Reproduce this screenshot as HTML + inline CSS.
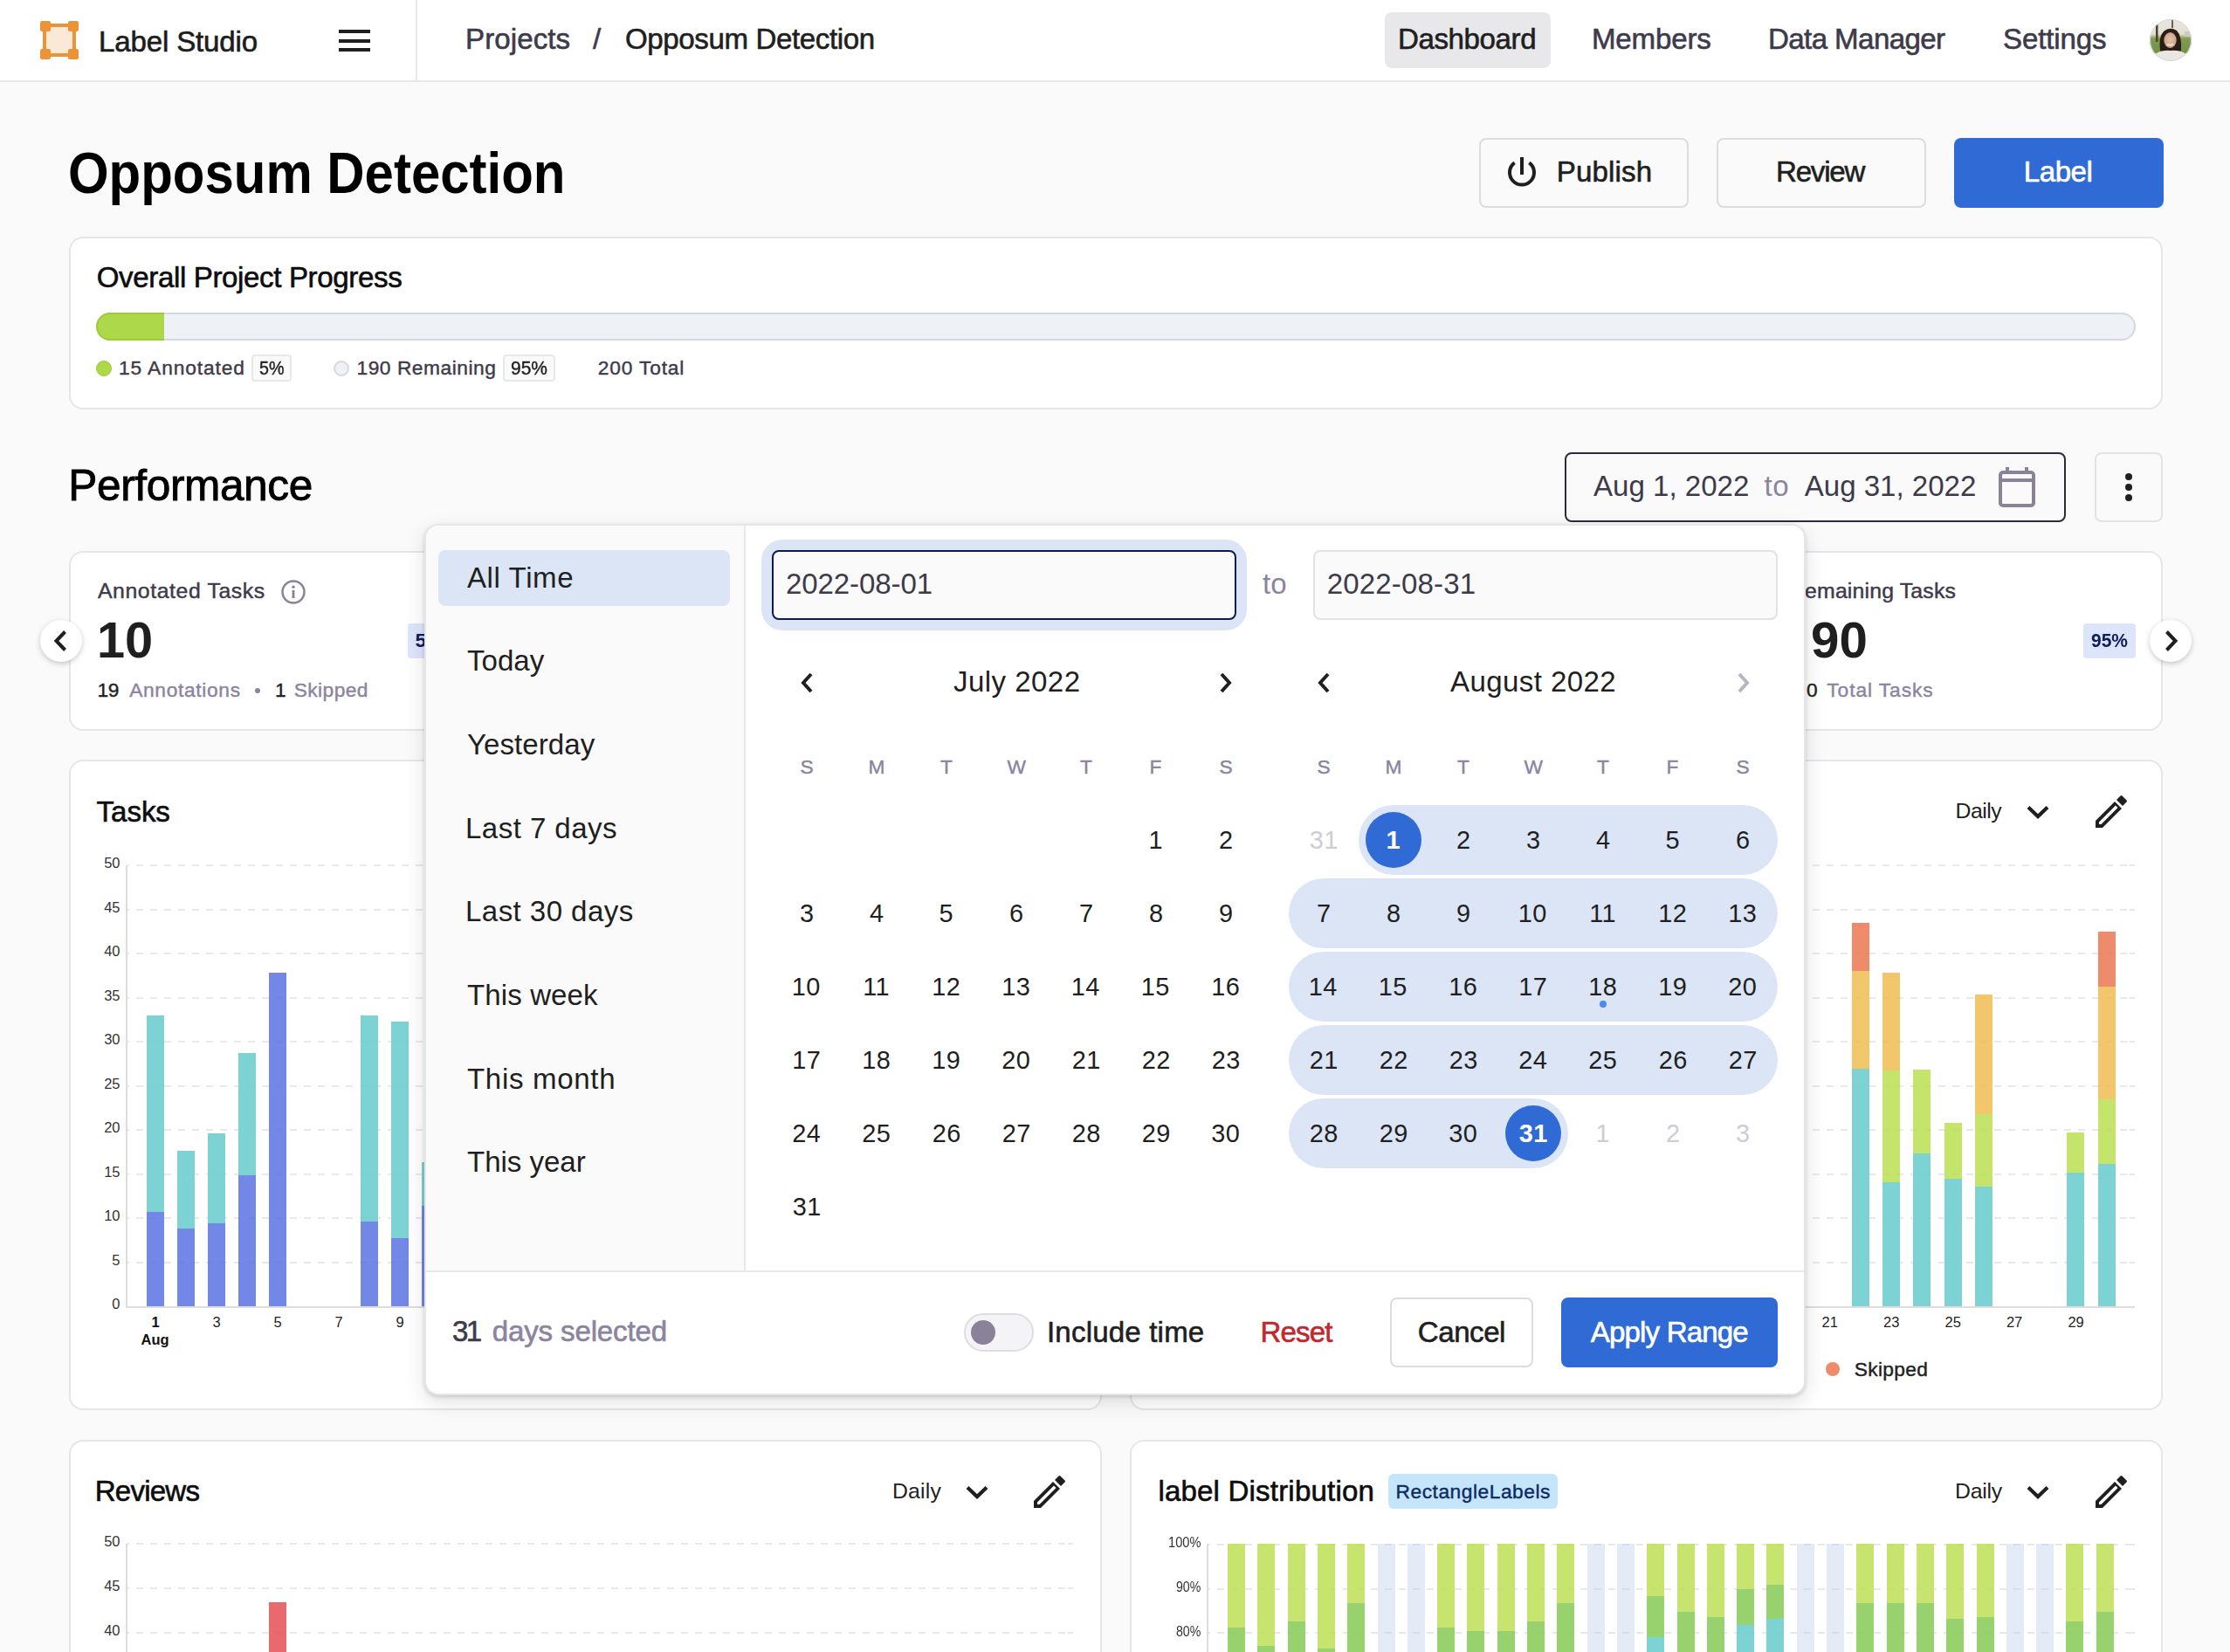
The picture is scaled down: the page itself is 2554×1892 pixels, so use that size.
<!DOCTYPE html><html><head><meta charset="utf-8"><title>Label Studio</title><style>
html,body{margin:0;padding:0;}
body{width:2554px;height:1892px;overflow:hidden;position:relative;background:#fafafa;font-family:"Liberation Sans",sans-serif;}
.a{position:absolute;}
.t{position:absolute;white-space:nowrap;line-height:1;}
</style></head><body>
<div class="a" style="left:0px;top:0px;width:2554px;height:92px;background:#fff;"></div>
<div class="a" style="left:0px;top:92px;width:2554px;height:2px;background:#e8e7eb;"></div>
<div class="a" style="left:476px;top:0px;width:2px;height:92px;background:#e8e7eb;"></div>
<svg class="a" style="left:46px;top:24px" width="44" height="44" viewBox="0 0 44 44">
<rect x="5" y="5" width="34" height="34" fill="#fbe9d8" stroke="#ec9435" stroke-width="4"/>
<rect x="0" y="0" width="12" height="12" rx="2" fill="#ec9435"/><rect x="32" y="0" width="12" height="12" rx="2" fill="#ec9435"/>
<rect x="0" y="32" width="12" height="12" rx="2" fill="#ec9435"/><rect x="32" y="32" width="12" height="12" rx="2" fill="#ec9435"/></svg>
<div class="t" style="left:113.00px;top:30.70px;font-size:33.07px;color:#1c1c1c;letter-spacing:-0.15px;-webkit-text-stroke:0.60px #1c1c1c;">Label Studio</div>
<div class="a" style="left:388px;top:34px;width:36px;height:4px;background:#1f1f1f;"></div>
<div class="a" style="left:388px;top:44.5px;width:36px;height:4px;background:#1f1f1f;"></div>
<div class="a" style="left:388px;top:54.5px;width:36px;height:4px;background:#1f1f1f;"></div>
<div class="t" style="left:533.00px;top:28.20px;font-size:33.07px;color:#3d3a4a;letter-spacing:0.10px;-webkit-text-stroke:0.60px #3d3a4a;">Projects</div>
<div class="t" style="left:679.00px;top:28.20px;font-size:33.07px;color:#3d3a4a;-webkit-text-stroke:0.60px #3d3a4a;">/</div>
<div class="t" style="left:716.00px;top:28.20px;font-size:33.07px;color:#1f1f1f;letter-spacing:-0.38px;-webkit-text-stroke:0.60px #1f1f1f;">Opposum Detection</div>
<div class="a" style="left:1586px;top:14px;width:190px;height:64px;background:#e8e8ea;border-radius:8px;"></div>
<div class="t" style="left:1601.00px;top:28.40px;font-size:33.07px;color:#1f1f1f;letter-spacing:-0.40px;-webkit-text-stroke:0.60px #1f1f1f;">Dashboard</div>
<div class="t" style="left:1823.00px;top:28.40px;font-size:33.07px;color:#3d3a4a;letter-spacing:-0.17px;-webkit-text-stroke:0.60px #3d3a4a;">Members</div>
<div class="t" style="left:2025.00px;top:28.40px;font-size:33.07px;color:#3d3a4a;letter-spacing:-0.58px;-webkit-text-stroke:0.60px #3d3a4a;">Data Manager</div>
<div class="t" style="left:2294.00px;top:28.40px;font-size:33.07px;color:#3d3a4a;letter-spacing:-0.14px;-webkit-text-stroke:0.60px #3d3a4a;">Settings</div>
<svg class="a" style="left:2462px;top:22px" width="48" height="48" viewBox="0 0 48 48">
<defs><clipPath id="av"><circle cx="24" cy="24" r="24"/></clipPath>
<linearGradient id="bgav" x1="0" y1="0" x2="0" y2="1"><stop offset="0" stop-color="#e9e6e0"/><stop offset="0.36" stop-color="#e4dfd5"/><stop offset="0.40" stop-color="#b9c47e"/><stop offset="0.46" stop-color="#7f9c52"/><stop offset="1" stop-color="#6b8a40"/></linearGradient>
<filter id="avblur"><feGaussianBlur stdDeviation="0.5"/></filter><radialGradient id="skin" cx="0.5" cy="0.45" r="0.6"><stop offset="0" stop-color="#e3c1a8"/><stop offset="1" stop-color="#c99b80"/></radialGradient></defs>
<g clip-path="url(#av)"><g filter="url(#avblur)">
<rect width="48" height="48" fill="url(#bgav)"/>
<rect x="7" y="6" width="2.5" height="20" fill="#4a4032"/><rect x="25" y="0" width="2" height="10" fill="#6a6050"/><rect x="40" y="14" width="8" height="6" fill="#cfc8bc"/>
<path d="M12 36 Q10 20 16 14 Q23 8 31 13 Q37 19 36 36 Q30 39 24 38 Q17 39 12 36Z" fill="#2a1d15"/>
<ellipse cx="23.5" cy="24" rx="7.2" ry="9" fill="url(#skin)"/>
<path d="M16 18 Q23 12 31 17 L31 14 Q23 9 16 15Z" fill="#2a1d15"/>
<path d="M20 28.5 Q23.5 31 27 28.5" stroke="#f4eee8" stroke-width="1.6" fill="none"/>
<path d="M0 48 L6 40 Q14 35 24 36 Q34 35 42 40 L48 48Z" fill="#ebe6e3"/>
</g></g><circle cx="24" cy="24" r="23.5" fill="none" stroke="#d8d6dc" stroke-width="1"/></svg>
<div class="t" style="left:78.19px;top:165.03px;font-size:66.10px;color:#000;font-weight:700;transform:scaleX(0.9068);transform-origin:0 0;">Opposum Detection</div>
<div class="a" style="left:1694px;top:158px;width:240px;height:80px;box-sizing:border-box;border:2px solid #dcdcdc;border-radius:8px;background:#fafafa;"></div>
<svg class="a" style="left:1725px;top:175px" width="36" height="42" viewBox="0 0 36 42">
<path d="M9.6 11.4 A14 14 0 1 0 26.4 11.4" fill="none" stroke="#1f1f1f" stroke-width="4"/>
<rect x="16" y="5" width="4" height="20" fill="#1f1f1f"/></svg>
<div class="t" style="left:1782.80px;top:180.40px;font-size:33.07px;color:#1f1f1f;letter-spacing:0.15px;-webkit-text-stroke:0.60px #1f1f1f;">Publish</div>
<div class="a" style="left:1966px;top:158px;width:240px;height:80px;box-sizing:border-box;border:2px solid #dcdcdc;border-radius:8px;background:#fafafa;"></div>
<div class="t" style="left:2034.00px;top:180.40px;font-size:33.07px;color:#1f1f1f;letter-spacing:-1.20px;-webkit-text-stroke:0.60px #1f1f1f;">Review</div>
<div class="a" style="left:2238px;top:158px;width:240px;height:80px;border-radius:8px;background:#306bd5;"></div>
<div class="t" style="left:2317.80px;top:180.40px;font-size:33.07px;color:#fff;letter-spacing:-0.45px;-webkit-text-stroke:0.60px #fff;">Label</div>
<div class="a" style="left:79px;top:271px;width:2398px;height:198px;box-sizing:border-box;border:2px solid #e6e5ea;border-radius:16px;background:#fff;"></div>
<div class="t" style="left:110.70px;top:301.00px;font-size:33.07px;color:#0d0d0d;letter-spacing:-0.36px;-webkit-text-stroke:0.60px #0d0d0d;">Overall Project Progress</div>
<div class="a" style="left:110px;top:358px;width:2336px;height:32px;box-sizing:border-box;border:2px solid #d5d8df;border-radius:16px;background:#eef1f6;overflow:hidden;"></div>
<div class="a" style="left:110px;top:358px;width:78px;height:32px;box-sizing:border-box;border:2px solid #9fcb3a;border-right:none;border-radius:16px 0 0 16px;background:#acd84a;"></div>
<div class="a" style="left:110px;top:413px;width:18px;height:18px;border-radius:50%;background:#acd84a;box-sizing:border-box;border:1.5px solid #9fcb3a;"></div>
<div class="t" style="left:136.00px;top:410.45px;font-size:22.74px;color:#3d3a4a;letter-spacing:0.91px;-webkit-text-stroke:0.41px #3d3a4a;">15 Annotated</div>
<div class="a" style="left:288px;top:406px;width:46px;height:31px;box-sizing:border-box;border:2px solid #e8e8e8;border-radius:4px;background:#fafafa;"></div>
<div class="t" style="left:296.80px;top:410.45px;font-size:22.74px;color:#1f1f1f;-webkit-text-stroke:0.41px #1f1f1f;transform:scaleX(0.8667);transform-origin:0 0;">5%</div>
<div class="a" style="left:382px;top:413px;width:18px;height:18px;border-radius:50%;background:#eef1f6;box-sizing:border-box;border:2px solid #d5d8df;"></div>
<div class="t" style="left:408.50px;top:410.45px;font-size:22.74px;color:#3d3a4a;letter-spacing:0.54px;-webkit-text-stroke:0.41px #3d3a4a;">190 Remaining</div>
<div class="a" style="left:576px;top:406px;width:60px;height:31px;box-sizing:border-box;border:2px solid #e8e8e8;border-radius:4px;background:#fafafa;"></div>
<div class="t" style="left:585.00px;top:410.45px;font-size:22.74px;color:#1f1f1f;-webkit-text-stroke:0.41px #1f1f1f;transform:scaleX(0.9217);transform-origin:0 0;">95%</div>
<div class="t" style="left:684.70px;top:410.45px;font-size:22.74px;color:#3d3a4a;letter-spacing:0.86px;-webkit-text-stroke:0.41px #3d3a4a;">200 Total</div>
<div class="t" style="left:78.30px;top:532.40px;font-size:49.60px;color:#000;letter-spacing:-0.39px;-webkit-text-stroke:0.89px #000;">Performance</div>
<div class="a" style="left:1792px;top:518px;width:574px;height:80px;box-sizing:border-box;border:2px solid #2e2a3a;border-radius:8px;background:#fafafa;"></div>
<div class="t" style="left:1825.00px;top:540.00px;font-size:33.07px;color:#3d3a4a;">Aug 1, 2022</div>
<div class="t" style="left:2020.50px;top:540.00px;font-size:33.07px;color:#8a84a0;letter-spacing:0.50px;">to</div>
<div class="t" style="left:2066.70px;top:540.00px;font-size:33.07px;color:#3d3a4a;">Aug 31, 2022</div>
<svg class="a" style="left:2289px;top:535px" width="42" height="46" viewBox="0 0 42 46">
<rect x="2" y="6" width="38" height="38" rx="3" fill="none" stroke="#8a8299" stroke-width="4"/>
<rect x="2" y="13" width="38" height="4" fill="#8a8299"/>
<rect x="8" y="0" width="4" height="8" fill="#8a8299"/><rect x="30" y="0" width="4" height="8" fill="#8a8299"/></svg>
<div class="a" style="left:2399px;top:518px;width:78px;height:80px;box-sizing:border-box;border:2px solid #e3e3e3;border-radius:8px;background:#fafafa;"></div>
<div class="a" style="left:2433.8px;top:541.8px;width:8.4px;height:8.4px;border-radius:50%;background:#1f1f1f;"></div>
<div class="a" style="left:2433.8px;top:553.8px;width:8.4px;height:8.4px;border-radius:50%;background:#1f1f1f;"></div>
<div class="a" style="left:2433.8px;top:565.8px;width:8.4px;height:8.4px;border-radius:50%;background:#1f1f1f;"></div>
<div class="a" style="left:79px;top:631px;width:462px;height:206px;box-sizing:border-box;border:2px solid #e6e5ea;border-radius:16px;background:#fff;"></div>
<div class="a" style="left:2014px;top:631px;width:463px;height:206px;box-sizing:border-box;border:2px solid #e6e5ea;border-radius:16px;background:#fff;"></div>
<div class="t" style="left:111.90px;top:664.80px;font-size:24.80px;color:#3d3a4a;letter-spacing:0.60px;-webkit-text-stroke:0.45px #3d3a4a;">Annotated Tasks</div>
<svg class="a" style="left:322px;top:664px" width="28" height="28" viewBox="0 0 28 28">
<circle cx="14" cy="14" r="12.5" fill="none" stroke="#8a8299" stroke-width="2.5"/>
<rect x="12.6" y="12" width="2.8" height="9" fill="#8a8299"/><circle cx="14" cy="8.3" r="1.7" fill="#8a8299"/></svg>
<div class="t" style="left:110.51px;top:705.48px;font-size:57.90px;color:#1f1f1f;font-weight:700;transform:scaleX(0.9966);transform-origin:0 0;">10</div>
<div class="a" style="left:467px;top:714px;width:60px;height:40px;background:#dde5fb;border-radius:4px;"></div>
<div class="t" style="left:475.50px;top:722.45px;font-size:22.74px;color:#0f1d5c;letter-spacing:0.50px;font-weight:700;">5%</div>
<div class="t" style="left:111.50px;top:779.15px;font-size:22.74px;color:#1f1f1f;letter-spacing:-0.30px;-webkit-text-stroke:0.41px #1f1f1f;">19</div>
<div class="t" style="left:148.20px;top:779.15px;font-size:22.74px;color:#8a84a0;letter-spacing:0.68px;-webkit-text-stroke:0.41px #8a84a0;">Annotations</div>
<div class="a" style="left:292px;top:788px;width:6px;height:6px;border-radius:50%;background:#8a84a0;"></div>
<div class="t" style="left:315.00px;top:779.15px;font-size:22.74px;color:#1f1f1f;-webkit-text-stroke:0.41px #1f1f1f;">1</div>
<div class="t" style="left:336.70px;top:779.15px;font-size:22.74px;color:#8a84a0;letter-spacing:0.43px;-webkit-text-stroke:0.41px #8a84a0;">Skipped</div>
<div class="t" style="left:2049.00px;top:664.80px;font-size:24.80px;color:#3d3a4a;letter-spacing:0.18px;-webkit-text-stroke:0.45px #3d3a4a;">Remaining Tasks</div>
<div class="t" style="left:2074.29px;top:705.48px;font-size:57.90px;color:#1f1f1f;font-weight:700;transform:scaleX(1.0067);transform-origin:0 0;">90</div>
<div class="a" style="left:2386px;top:714px;width:60px;height:40px;background:#dde5fb;border-radius:4px;"></div>
<div class="t" style="left:2394.90px;top:722.45px;font-size:22.74px;color:#0f1d5c;font-weight:700;transform:scaleX(0.9217);transform-origin:0 0;">95%</div>
<div class="t" style="left:2041.70px;top:779.15px;font-size:22.74px;color:#1f1f1f;letter-spacing:1.00px;-webkit-text-stroke:0.41px #1f1f1f;">200</div>
<div class="t" style="left:2092.30px;top:779.15px;font-size:22.74px;color:#8a84a0;letter-spacing:0.93px;-webkit-text-stroke:0.41px #8a84a0;">Total Tasks</div>
<div class="a" style="left:46px;top:710px;width:48px;height:48px;border-radius:50%;background:#fff;box-shadow:0 2px 6px rgba(0,0,0,.22);"></div>
<svg class="a" style="left:58px;top:720px" width="24" height="28" viewBox="0 0 24 28"><path d="M16.5 3.5 L6.5 14 L16.5 24.5" fill="none" stroke="#1f1f1f" stroke-width="4"/></svg>
<div class="a" style="left:2462px;top:710px;width:48px;height:48px;border-radius:50%;background:#fff;box-shadow:0 2px 6px rgba(0,0,0,.22);"></div>
<svg class="a" style="left:2474px;top:720px" width="24" height="28" viewBox="0 0 24 28"><path d="M7.5 3.5 L17.5 14 L7.5 24.5" fill="none" stroke="#1f1f1f" stroke-width="4"/></svg>
<div class="a" style="left:79px;top:870px;width:1183px;height:745px;box-sizing:border-box;border:2px solid #e6e5ea;border-radius:16px;background:#fff;"></div>
<div class="t" style="left:110.60px;top:912.50px;font-size:33.07px;color:#0d0d0d;letter-spacing:-0.05px;-webkit-text-stroke:0.60px #0d0d0d;">Tasks</div>
<div class="t" style="left:1022.00px;top:916.80px;font-size:24.80px;color:#1f1f1f;letter-spacing:0.18px;">Daily</div>
<svg class="a" style="left:1106px;top:922px" width="26" height="16" viewBox="0 0 26 16"><path d="M2 2.5 L13 13 L24 2.5" fill="none" stroke="#1f1f1f" stroke-width="4.2"/></svg>
<svg class="a" style="left:1183px;top:911px" width="38" height="38" viewBox="0 0 38 38">
<path d="M1 29 L23 7 L31 15 L9 37 L1 37 Z M5 30.5 L5 33 L7.5 33 L26.5 14 L24 11.5 Z" fill="#1f1f1f" fill-rule="evenodd"/>
<path d="M25 5 L29.5 0.5 Q30.5 -0.3 31.5 0.5 L36.5 5.5 Q37.3 6.5 36.5 7.5 L32 12 Z" fill="#1f1f1f"/></svg>
<div class="t" style="left:119.20px;top:980.03px;font-size:16.50px;color:#333;">50</div>
<div class="t" style="left:119.20px;top:1030.53px;font-size:16.50px;color:#333;">45</div>
<div class="t" style="left:119.20px;top:1081.03px;font-size:16.50px;color:#333;">40</div>
<div class="t" style="left:119.20px;top:1131.53px;font-size:16.50px;color:#333;">35</div>
<div class="t" style="left:119.20px;top:1182.03px;font-size:16.50px;color:#333;">30</div>
<div class="t" style="left:119.20px;top:1232.53px;font-size:16.50px;color:#333;">25</div>
<div class="t" style="left:119.20px;top:1283.03px;font-size:16.50px;color:#333;">20</div>
<div class="t" style="left:119.20px;top:1333.53px;font-size:16.50px;color:#333;">15</div>
<div class="t" style="left:119.20px;top:1384.03px;font-size:16.50px;color:#333;">10</div>
<div class="t" style="left:128.20px;top:1434.53px;font-size:16.50px;color:#333;">5</div>
<div class="t" style="left:128.20px;top:1485.03px;font-size:16.50px;color:#333;">0</div>
<div class="a" style="left:144px;top:991px;width:2px;height:506px;background:#dddde0;"></div>
<div class="a" style="left:144px;top:1496px;width:1085px;height:2px;background:#dddde0;"></div>
<div class="a" style="left:146px;top:990.0px;width:1083px;height:2px;background:repeating-linear-gradient(to right,#e8e7ec 0 8px,transparent 8px 16px);background-position:-6px 0;"></div>
<div class="a" style="left:146px;top:1040.5px;width:1083px;height:2px;background:repeating-linear-gradient(to right,#e8e7ec 0 8px,transparent 8px 16px);background-position:-6px 0;"></div>
<div class="a" style="left:146px;top:1091.0px;width:1083px;height:2px;background:repeating-linear-gradient(to right,#e8e7ec 0 8px,transparent 8px 16px);background-position:-6px 0;"></div>
<div class="a" style="left:146px;top:1141.5px;width:1083px;height:2px;background:repeating-linear-gradient(to right,#e8e7ec 0 8px,transparent 8px 16px);background-position:-6px 0;"></div>
<div class="a" style="left:146px;top:1192.0px;width:1083px;height:2px;background:repeating-linear-gradient(to right,#e8e7ec 0 8px,transparent 8px 16px);background-position:-6px 0;"></div>
<div class="a" style="left:146px;top:1242.5px;width:1083px;height:2px;background:repeating-linear-gradient(to right,#e8e7ec 0 8px,transparent 8px 16px);background-position:-6px 0;"></div>
<div class="a" style="left:146px;top:1293.0px;width:1083px;height:2px;background:repeating-linear-gradient(to right,#e8e7ec 0 8px,transparent 8px 16px);background-position:-6px 0;"></div>
<div class="a" style="left:146px;top:1343.5px;width:1083px;height:2px;background:repeating-linear-gradient(to right,#e8e7ec 0 8px,transparent 8px 16px);background-position:-6px 0;"></div>
<div class="a" style="left:146px;top:1394.0px;width:1083px;height:2px;background:repeating-linear-gradient(to right,#e8e7ec 0 8px,transparent 8px 16px);background-position:-6px 0;"></div>
<div class="a" style="left:146px;top:1444.5px;width:1083px;height:2px;background:repeating-linear-gradient(to right,#e8e7ec 0 8px,transparent 8px 16px);background-position:-6px 0;"></div>
<div class="a" style="left:168px;top:1388px;width:20px;height:108px;background:rgba(95,118,227,0.88);"></div>
<div class="a" style="left:168px;top:1163px;width:20px;height:225px;background:rgba(107,205,205,0.88);"></div>
<div class="a" style="left:203px;top:1407px;width:20px;height:89px;background:rgba(95,118,227,0.88);"></div>
<div class="a" style="left:203px;top:1318px;width:20px;height:89px;background:rgba(107,205,205,0.88);"></div>
<div class="a" style="left:238px;top:1401px;width:20px;height:95px;background:rgba(95,118,227,0.88);"></div>
<div class="a" style="left:238px;top:1298px;width:20px;height:103px;background:rgba(107,205,205,0.88);"></div>
<div class="a" style="left:273px;top:1346px;width:20px;height:150px;background:rgba(95,118,227,0.88);"></div>
<div class="a" style="left:273px;top:1206px;width:20px;height:140px;background:rgba(107,205,205,0.88);"></div>
<div class="a" style="left:308px;top:1114px;width:20px;height:382px;background:rgba(95,118,227,0.88);"></div>
<div class="a" style="left:413px;top:1399px;width:20px;height:97px;background:rgba(95,118,227,0.88);"></div>
<div class="a" style="left:413px;top:1163px;width:20px;height:236px;background:rgba(107,205,205,0.88);"></div>
<div class="a" style="left:448px;top:1418px;width:20px;height:78px;background:rgba(95,118,227,0.88);"></div>
<div class="a" style="left:448px;top:1170px;width:20px;height:248px;background:rgba(107,205,205,0.88);"></div>
<div class="a" style="left:483px;top:1381px;width:20px;height:115px;background:rgba(95,118,227,0.88);"></div>
<div class="a" style="left:483px;top:1331px;width:20px;height:50px;background:rgba(107,205,205,0.88);"></div>
<div class="a" style="left:518px;top:1375px;width:20px;height:121px;background:rgba(95,118,227,0.88);"></div>
<div class="a" style="left:518px;top:1233px;width:20px;height:142px;background:rgba(107,205,205,0.88);"></div>
<div class="a" style="left:553px;top:1395px;width:20px;height:101px;background:rgba(95,118,227,0.88);"></div>
<div class="a" style="left:553px;top:1244px;width:20px;height:151px;background:rgba(107,205,205,0.88);"></div>
<div class="a" style="left:588px;top:1405px;width:20px;height:91px;background:rgba(95,118,227,0.88);"></div>
<div class="a" style="left:588px;top:1284px;width:20px;height:121px;background:rgba(107,205,205,0.88);"></div>
<div class="a" style="left:623px;top:1385px;width:20px;height:111px;background:rgba(95,118,227,0.88);"></div>
<div class="a" style="left:623px;top:1203px;width:20px;height:182px;background:rgba(107,205,205,0.88);"></div>
<div class="a" style="left:658px;top:1355px;width:20px;height:141px;background:rgba(95,118,227,0.88);"></div>
<div class="a" style="left:658px;top:1254px;width:20px;height:101px;background:rgba(107,205,205,0.88);"></div>
<div class="a" style="left:693px;top:1415px;width:20px;height:81px;background:rgba(95,118,227,0.88);"></div>
<div class="a" style="left:693px;top:1284px;width:20px;height:131px;background:rgba(107,205,205,0.88);"></div>
<div class="a" style="left:728px;top:1375px;width:20px;height:121px;background:rgba(95,118,227,0.88);"></div>
<div class="a" style="left:728px;top:1203px;width:20px;height:172px;background:rgba(107,205,205,0.88);"></div>
<div class="a" style="left:763px;top:1395px;width:20px;height:101px;background:rgba(95,118,227,0.88);"></div>
<div class="a" style="left:763px;top:1274px;width:20px;height:121px;background:rgba(107,205,205,0.88);"></div>
<div class="a" style="left:798px;top:1405px;width:20px;height:91px;background:rgba(95,118,227,0.88);"></div>
<div class="a" style="left:798px;top:1244px;width:20px;height:161px;background:rgba(107,205,205,0.88);"></div>
<div class="a" style="left:833px;top:1385px;width:20px;height:111px;background:rgba(95,118,227,0.88);"></div>
<div class="a" style="left:833px;top:1294px;width:20px;height:91px;background:rgba(107,205,205,0.88);"></div>
<div class="t" style="left:173.50px;top:1506.03px;font-size:16.50px;color:#111;font-weight:700;">1</div>
<div class="t" style="left:243.50px;top:1506.03px;font-size:16.50px;color:#1f1f1f;">3</div>
<div class="t" style="left:313.50px;top:1506.03px;font-size:16.50px;color:#1f1f1f;">5</div>
<div class="t" style="left:383.50px;top:1506.03px;font-size:16.50px;color:#1f1f1f;">7</div>
<div class="t" style="left:453.50px;top:1506.03px;font-size:16.50px;color:#1f1f1f;">9</div>
<div class="t" style="left:519.00px;top:1506.03px;font-size:16.50px;color:#1f1f1f;">11</div>
<div class="t" style="left:588.50px;top:1506.03px;font-size:16.50px;color:#1f1f1f;">13</div>
<div class="t" style="left:658.50px;top:1506.03px;font-size:16.50px;color:#1f1f1f;">15</div>
<div class="t" style="left:728.50px;top:1506.03px;font-size:16.50px;color:#1f1f1f;">17</div>
<div class="t" style="left:798.50px;top:1506.03px;font-size:16.50px;color:#1f1f1f;">19</div>
<div class="t" style="left:869.00px;top:1506.03px;font-size:16.50px;color:#1f1f1f;">21</div>
<div class="t" style="left:939.00px;top:1506.03px;font-size:16.50px;color:#1f1f1f;">23</div>
<div class="t" style="left:1009.00px;top:1506.03px;font-size:16.50px;color:#1f1f1f;">25</div>
<div class="t" style="left:1079.00px;top:1506.03px;font-size:16.50px;color:#1f1f1f;">27</div>
<div class="t" style="left:1149.00px;top:1506.03px;font-size:16.50px;color:#1f1f1f;">29</div>
<div class="t" style="left:161.50px;top:1526.03px;font-size:16.50px;color:#111;font-weight:700;">Aug</div>
<div class="a" style="left:1294px;top:870px;width:1183px;height:745px;box-sizing:border-box;border:2px solid #e6e5ea;border-radius:16px;background:#fff;"></div>
<div class="t" style="left:2239.60px;top:916.80px;font-size:24.80px;color:#1f1f1f;letter-spacing:-0.52px;">Daily</div>
<svg class="a" style="left:2321px;top:922px" width="26" height="16" viewBox="0 0 26 16"><path d="M2 2.5 L13 13 L24 2.5" fill="none" stroke="#1f1f1f" stroke-width="4.2"/></svg>
<svg class="a" style="left:2399px;top:911px" width="38" height="38" viewBox="0 0 38 38">
<path d="M1 29 L23 7 L31 15 L9 37 L1 37 Z M5 30.5 L5 33 L7.5 33 L26.5 14 L24 11.5 Z" fill="#1f1f1f" fill-rule="evenodd"/>
<path d="M25 5 L29.5 0.5 Q30.5 -0.3 31.5 0.5 L36.5 5.5 Q37.3 6.5 36.5 7.5 L32 12 Z" fill="#1f1f1f"/></svg>
<div class="a" style="left:1362px;top:1496px;width:1083px;height:2px;background:#dddde0;"></div>
<div class="a" style="left:1362px;top:990.0px;width:1083px;height:2px;background:repeating-linear-gradient(to right,#e8e7ec 0 8px,transparent 8px 16px);background-position:-6px 0;"></div>
<div class="a" style="left:1362px;top:1040.5px;width:1083px;height:2px;background:repeating-linear-gradient(to right,#e8e7ec 0 8px,transparent 8px 16px);background-position:-6px 0;"></div>
<div class="a" style="left:1362px;top:1091.0px;width:1083px;height:2px;background:repeating-linear-gradient(to right,#e8e7ec 0 8px,transparent 8px 16px);background-position:-6px 0;"></div>
<div class="a" style="left:1362px;top:1141.5px;width:1083px;height:2px;background:repeating-linear-gradient(to right,#e8e7ec 0 8px,transparent 8px 16px);background-position:-6px 0;"></div>
<div class="a" style="left:1362px;top:1192.0px;width:1083px;height:2px;background:repeating-linear-gradient(to right,#e8e7ec 0 8px,transparent 8px 16px);background-position:-6px 0;"></div>
<div class="a" style="left:1362px;top:1242.5px;width:1083px;height:2px;background:repeating-linear-gradient(to right,#e8e7ec 0 8px,transparent 8px 16px);background-position:-6px 0;"></div>
<div class="a" style="left:1362px;top:1293.0px;width:1083px;height:2px;background:repeating-linear-gradient(to right,#e8e7ec 0 8px,transparent 8px 16px);background-position:-6px 0;"></div>
<div class="a" style="left:1362px;top:1343.5px;width:1083px;height:2px;background:repeating-linear-gradient(to right,#e8e7ec 0 8px,transparent 8px 16px);background-position:-6px 0;"></div>
<div class="a" style="left:1362px;top:1394.0px;width:1083px;height:2px;background:repeating-linear-gradient(to right,#e8e7ec 0 8px,transparent 8px 16px);background-position:-6px 0;"></div>
<div class="a" style="left:1362px;top:1444.5px;width:1083px;height:2px;background:repeating-linear-gradient(to right,#e8e7ec 0 8px,transparent 8px 16px);background-position:-6px 0;"></div>
<div class="a" style="left:2120.7px;top:1224px;width:20px;height:272px;background:rgba(107,205,205,0.88);"></div>
<div class="a" style="left:2120.7px;top:1112px;width:20px;height:112px;background:rgba(240,190,87,0.88);"></div>
<div class="a" style="left:2120.7px;top:1057px;width:20px;height:55px;background:rgba(235,123,86,0.88);"></div>
<div class="a" style="left:2156.0px;top:1354px;width:20px;height:142px;background:rgba(107,205,205,0.88);"></div>
<div class="a" style="left:2156.0px;top:1226px;width:20px;height:128px;background:rgba(189,224,87,0.88);"></div>
<div class="a" style="left:2156.0px;top:1114px;width:20px;height:112px;background:rgba(240,190,87,0.88);"></div>
<div class="a" style="left:2191.2px;top:1321px;width:20px;height:175px;background:rgba(107,205,205,0.88);"></div>
<div class="a" style="left:2191.2px;top:1225px;width:20px;height:96px;background:rgba(189,224,87,0.88);"></div>
<div class="a" style="left:2226.5px;top:1350px;width:20px;height:146px;background:rgba(107,205,205,0.88);"></div>
<div class="a" style="left:2226.5px;top:1286px;width:20px;height:64px;background:rgba(189,224,87,0.88);"></div>
<div class="a" style="left:2261.7px;top:1359px;width:20px;height:137px;background:rgba(107,205,205,0.88);"></div>
<div class="a" style="left:2261.7px;top:1276px;width:20px;height:83px;background:rgba(189,224,87,0.88);"></div>
<div class="a" style="left:2261.7px;top:1139px;width:20px;height:137px;background:rgba(240,190,87,0.88);"></div>
<div class="a" style="left:2367.4px;top:1343px;width:20px;height:153px;background:rgba(107,205,205,0.88);"></div>
<div class="a" style="left:2367.4px;top:1297px;width:20px;height:46px;background:rgba(189,224,87,0.88);"></div>
<div class="a" style="left:2402.7px;top:1333px;width:20px;height:163px;background:rgba(107,205,205,0.88);"></div>
<div class="a" style="left:2402.7px;top:1259px;width:20px;height:74px;background:rgba(189,224,87,0.88);"></div>
<div class="a" style="left:2402.7px;top:1130px;width:20px;height:129px;background:rgba(240,190,87,0.88);"></div>
<div class="a" style="left:2402.7px;top:1067px;width:20px;height:63px;background:rgba(235,123,86,0.88);"></div>
<div class="t" style="left:1456.68px;top:1506.03px;font-size:16.50px;color:#1f1f1f;">3</div>
<div class="t" style="left:1527.16px;top:1506.03px;font-size:16.50px;color:#1f1f1f;">5</div>
<div class="t" style="left:1597.64px;top:1506.03px;font-size:16.50px;color:#1f1f1f;">7</div>
<div class="t" style="left:1668.12px;top:1506.03px;font-size:16.50px;color:#1f1f1f;">9</div>
<div class="t" style="left:1734.10px;top:1506.03px;font-size:16.50px;color:#1f1f1f;">11</div>
<div class="t" style="left:1804.08px;top:1506.03px;font-size:16.50px;color:#1f1f1f;">13</div>
<div class="t" style="left:1874.56px;top:1506.03px;font-size:16.50px;color:#1f1f1f;">15</div>
<div class="t" style="left:1945.04px;top:1506.03px;font-size:16.50px;color:#1f1f1f;">17</div>
<div class="t" style="left:2015.52px;top:1506.03px;font-size:16.50px;color:#1f1f1f;">19</div>
<div class="t" style="left:2086.50px;top:1506.03px;font-size:16.50px;color:#1f1f1f;">21</div>
<div class="t" style="left:2156.98px;top:1506.03px;font-size:16.50px;color:#1f1f1f;">23</div>
<div class="t" style="left:2227.46px;top:1506.03px;font-size:16.50px;color:#1f1f1f;">25</div>
<div class="t" style="left:2297.94px;top:1506.03px;font-size:16.50px;color:#1f1f1f;">27</div>
<div class="t" style="left:2368.42px;top:1506.03px;font-size:16.50px;color:#1f1f1f;">29</div>
<div class="a" style="left:2091px;top:1560px;width:16px;height:16px;border-radius:50%;background:#ed8b6a;"></div>
<div class="t" style="left:2123.80px;top:1556.75px;font-size:22.74px;color:#1f1f1f;letter-spacing:0.32px;-webkit-text-stroke:0.41px #1f1f1f;">Skipped</div>
<div class="a" style="left:79px;top:1649px;width:1183px;height:400px;box-sizing:border-box;border:2px solid #e6e5ea;border-radius:16px;background:#fff;"></div>
<div class="t" style="left:108.80px;top:1690.80px;font-size:33.07px;color:#0d0d0d;letter-spacing:-0.80px;-webkit-text-stroke:0.60px #0d0d0d;">Reviews</div>
<div class="t" style="left:1022.00px;top:1695.50px;font-size:24.80px;color:#1f1f1f;letter-spacing:0.18px;">Daily</div>
<svg class="a" style="left:1106px;top:1701px" width="26" height="16" viewBox="0 0 26 16"><path d="M2 2.5 L13 13 L24 2.5" fill="none" stroke="#1f1f1f" stroke-width="4.2"/></svg>
<svg class="a" style="left:1183px;top:1690px" width="38" height="38" viewBox="0 0 38 38">
<path d="M1 29 L23 7 L31 15 L9 37 L1 37 Z M5 30.5 L5 33 L7.5 33 L26.5 14 L24 11.5 Z" fill="#1f1f1f" fill-rule="evenodd"/>
<path d="M25 5 L29.5 0.5 Q30.5 -0.3 31.5 0.5 L36.5 5.5 Q37.3 6.5 36.5 7.5 L32 12 Z" fill="#1f1f1f"/></svg>
<div class="t" style="left:119.20px;top:1757.33px;font-size:16.50px;color:#333;">50</div>
<div class="a" style="left:146px;top:1767.3px;width:1083px;height:2px;background:repeating-linear-gradient(to right,#e8e7ec 0 8px,transparent 8px 16px);background-position:-6px 0;"></div>
<div class="t" style="left:119.20px;top:1807.93px;font-size:16.50px;color:#333;">45</div>
<div class="a" style="left:146px;top:1817.8999999999999px;width:1083px;height:2px;background:repeating-linear-gradient(to right,#e8e7ec 0 8px,transparent 8px 16px);background-position:-6px 0;"></div>
<div class="t" style="left:119.20px;top:1858.53px;font-size:16.50px;color:#333;">40</div>
<div class="a" style="left:146px;top:1868.5px;width:1083px;height:2px;background:repeating-linear-gradient(to right,#e8e7ec 0 8px,transparent 8px 16px);background-position:-6px 0;"></div>
<div class="t" style="left:119.20px;top:1909.13px;font-size:16.50px;color:#333;">35</div>
<div class="a" style="left:146px;top:1919.1px;width:1083px;height:2px;background:repeating-linear-gradient(to right,#e8e7ec 0 8px,transparent 8px 16px);background-position:-6px 0;"></div>
<div class="a" style="left:144px;top:1768px;width:2px;height:130px;background:#dddde0;"></div>
<div class="a" style="left:308px;top:1835.4px;width:20px;height:60px;background:rgba(229,85,89,0.88);"></div>
<div class="a" style="left:1294px;top:1649px;width:1183px;height:400px;box-sizing:border-box;border:2px solid #e6e5ea;border-radius:16px;background:#fff;"></div>
<div class="t" style="left:1326.40px;top:1690.80px;font-size:33.07px;color:#0d0d0d;letter-spacing:0.18px;-webkit-text-stroke:0.60px #0d0d0d;">label Distribution</div>
<div class="a" style="left:1590px;top:1688px;width:194px;height:40px;background:#c5e5fb;border-radius:6px;"></div>
<div class="t" style="left:1598.50px;top:1696.75px;font-size:22.74px;color:#0e2a66;letter-spacing:0.54px;-webkit-text-stroke:0.41px #0e2a66;">RectangleLabels</div>
<div class="t" style="left:2239.00px;top:1695.50px;font-size:24.80px;color:#1f1f1f;letter-spacing:-0.25px;">Daily</div>
<svg class="a" style="left:2321px;top:1701px" width="26" height="16" viewBox="0 0 26 16"><path d="M2 2.5 L13 13 L24 2.5" fill="none" stroke="#1f1f1f" stroke-width="4.2"/></svg>
<svg class="a" style="left:2399px;top:1690px" width="38" height="38" viewBox="0 0 38 38">
<path d="M1 29 L23 7 L31 15 L9 37 L1 37 Z M5 30.5 L5 33 L7.5 33 L26.5 14 L24 11.5 Z" fill="#1f1f1f" fill-rule="evenodd"/>
<path d="M25 5 L29.5 0.5 Q30.5 -0.3 31.5 0.5 L36.5 5.5 Q37.3 6.5 36.5 7.5 L32 12 Z" fill="#1f1f1f"/></svg>
<div class="a" style="left:1382px;top:1768px;width:2px;height:130px;background:#dddde0;"></div>
<div class="a" style="left:1384px;top:1767.9px;width:1061px;height:2px;background:repeating-linear-gradient(to right,#e8e7ec 0 8px,transparent 8px 16px);background-position:-6px 0;"></div>
<div class="a" style="left:1384px;top:1818.5px;width:1061px;height:2px;background:repeating-linear-gradient(to right,#e8e7ec 0 8px,transparent 8px 16px);background-position:-6px 0;"></div>
<div class="a" style="left:1384px;top:1869.1000000000001px;width:1061px;height:2px;background:repeating-linear-gradient(to right,#e8e7ec 0 8px,transparent 8px 16px);background-position:-6px 0;"></div>
<div class="a" style="left:1406.0px;top:1768px;width:20px;height:96px;background:rgba(190,224,90,0.88);"></div>
<div class="a" style="left:1406.0px;top:1864px;width:20px;height:34px;background:rgba(138,204,90,0.88);"></div>
<div class="a" style="left:1440.3px;top:1768px;width:20px;height:117px;background:rgba(190,224,90,0.88);"></div>
<div class="a" style="left:1440.3px;top:1885px;width:20px;height:13px;background:rgba(138,204,90,0.88);"></div>
<div class="a" style="left:1474.6px;top:1768px;width:20px;height:89px;background:rgba(190,224,90,0.88);"></div>
<div class="a" style="left:1474.6px;top:1857px;width:20px;height:41px;background:rgba(138,204,90,0.88);"></div>
<div class="a" style="left:1508.9px;top:1768px;width:20px;height:120px;background:rgba(190,224,90,0.88);"></div>
<div class="a" style="left:1508.9px;top:1888px;width:20px;height:10px;background:rgba(138,204,90,0.88);"></div>
<div class="a" style="left:1543.2px;top:1768px;width:20px;height:68px;background:rgba(190,224,90,0.88);"></div>
<div class="a" style="left:1543.2px;top:1836px;width:20px;height:62px;background:rgba(138,204,90,0.88);"></div>
<div class="a" style="left:1577.5px;top:1768px;width:20px;height:130px;background:rgba(196,210,236,.45);"></div>
<div class="a" style="left:1611.8px;top:1768px;width:20px;height:130px;background:rgba(196,210,236,.45);"></div>
<div class="a" style="left:1646.1px;top:1768px;width:20px;height:96px;background:rgba(190,224,90,0.88);"></div>
<div class="a" style="left:1646.1px;top:1864px;width:20px;height:34px;background:rgba(138,204,90,0.88);"></div>
<div class="a" style="left:1680.4px;top:1768px;width:20px;height:100px;background:rgba(190,224,90,0.88);"></div>
<div class="a" style="left:1680.4px;top:1868px;width:20px;height:30px;background:rgba(138,204,90,0.88);"></div>
<div class="a" style="left:1714.7px;top:1768px;width:20px;height:100px;background:rgba(190,224,90,0.88);"></div>
<div class="a" style="left:1714.7px;top:1868px;width:20px;height:30px;background:rgba(138,204,90,0.88);"></div>
<div class="a" style="left:1749.0px;top:1768px;width:20px;height:89px;background:rgba(190,224,90,0.88);"></div>
<div class="a" style="left:1749.0px;top:1857px;width:20px;height:41px;background:rgba(138,204,90,0.88);"></div>
<div class="a" style="left:1783.3px;top:1768px;width:20px;height:68px;background:rgba(190,224,90,0.88);"></div>
<div class="a" style="left:1783.3px;top:1836px;width:20px;height:62px;background:rgba(138,204,90,0.88);"></div>
<div class="a" style="left:1817.6px;top:1768px;width:20px;height:130px;background:rgba(196,210,236,.45);"></div>
<div class="a" style="left:1851.9px;top:1768px;width:20px;height:130px;background:rgba(196,210,236,.45);"></div>
<div class="a" style="left:1886.2px;top:1768px;width:20px;height:60px;background:rgba(190,224,90,0.88);"></div>
<div class="a" style="left:1886.2px;top:1828px;width:20px;height:47px;background:rgba(138,204,90,0.88);"></div>
<div class="a" style="left:1886.2px;top:1875px;width:20px;height:23px;background:rgba(107,205,205,0.88);"></div>
<div class="a" style="left:1920.5px;top:1768px;width:20px;height:78px;background:rgba(190,224,90,0.88);"></div>
<div class="a" style="left:1920.5px;top:1846px;width:20px;height:52px;background:rgba(138,204,90,0.88);"></div>
<div class="a" style="left:1954.8px;top:1768px;width:20px;height:84px;background:rgba(190,224,90,0.88);"></div>
<div class="a" style="left:1954.8px;top:1852px;width:20px;height:46px;background:rgba(138,204,90,0.88);"></div>
<div class="a" style="left:1989.1px;top:1768px;width:20px;height:52px;background:rgba(190,224,90,0.88);"></div>
<div class="a" style="left:1989.1px;top:1820px;width:20px;height:41px;background:rgba(138,204,90,0.88);"></div>
<div class="a" style="left:1989.1px;top:1861px;width:20px;height:37px;background:rgba(107,205,205,0.88);"></div>
<div class="a" style="left:2023.4px;top:1768px;width:20px;height:47px;background:rgba(190,224,90,0.88);"></div>
<div class="a" style="left:2023.4px;top:1815px;width:20px;height:39px;background:rgba(138,204,90,0.88);"></div>
<div class="a" style="left:2023.4px;top:1854px;width:20px;height:44px;background:rgba(107,205,205,0.88);"></div>
<div class="a" style="left:2057.7px;top:1768px;width:20px;height:130px;background:rgba(196,210,236,.45);"></div>
<div class="a" style="left:2092.0px;top:1768px;width:20px;height:130px;background:rgba(196,210,236,.45);"></div>
<div class="a" style="left:2126.3px;top:1768px;width:20px;height:68px;background:rgba(190,224,90,0.88);"></div>
<div class="a" style="left:2126.3px;top:1836px;width:20px;height:62px;background:rgba(138,204,90,0.88);"></div>
<div class="a" style="left:2160.6px;top:1768px;width:20px;height:68px;background:rgba(190,224,90,0.88);"></div>
<div class="a" style="left:2160.6px;top:1836px;width:20px;height:62px;background:rgba(138,204,90,0.88);"></div>
<div class="a" style="left:2194.9px;top:1768px;width:20px;height:68px;background:rgba(190,224,90,0.88);"></div>
<div class="a" style="left:2194.9px;top:1836px;width:20px;height:62px;background:rgba(138,204,90,0.88);"></div>
<div class="a" style="left:2229.2px;top:1768px;width:20px;height:86px;background:rgba(190,224,90,0.88);"></div>
<div class="a" style="left:2229.2px;top:1854px;width:20px;height:44px;background:rgba(138,204,90,0.88);"></div>
<div class="a" style="left:2263.5px;top:1768px;width:20px;height:84px;background:rgba(190,224,90,0.88);"></div>
<div class="a" style="left:2263.5px;top:1852px;width:20px;height:46px;background:rgba(138,204,90,0.88);"></div>
<div class="a" style="left:2297.8px;top:1768px;width:20px;height:130px;background:rgba(196,210,236,.45);"></div>
<div class="a" style="left:2332.1px;top:1768px;width:20px;height:130px;background:rgba(196,210,236,.45);"></div>
<div class="a" style="left:2366.4px;top:1768px;width:20px;height:89px;background:rgba(190,224,90,0.88);"></div>
<div class="a" style="left:2366.4px;top:1857px;width:20px;height:41px;background:rgba(138,204,90,0.88);"></div>
<div class="a" style="left:2400.7px;top:1768px;width:20px;height:78px;background:rgba(190,224,90,0.88);"></div>
<div class="a" style="left:2400.7px;top:1846px;width:20px;height:52px;background:rgba(138,204,90,0.88);"></div>
<div class="t" style="left:1337.91px;top:1758.33px;font-size:16.50px;color:#333;transform:scaleX(0.8878);transform-origin:0 0;">100%</div>
<div class="t" style="left:1346.90px;top:1808.93px;font-size:16.50px;color:#333;transform:scaleX(0.8576);transform-origin:0 0;">90%</div>
<div class="t" style="left:1346.90px;top:1859.53px;font-size:16.50px;color:#333;transform:scaleX(0.8576);transform-origin:0 0;">80%</div>
<div class="a" style="left:486px;top:600px;width:1582px;height:998px;box-sizing:border-box;border:2px solid #e6e6ea;border-radius:16px;background:#fff;box-shadow:0 2px 4px rgba(0,0,0,.14),0 8px 24px rgba(0,0,0,.12);overflow:hidden;">
<div class="a" style="left:0;top:0;width:364px;height:853px;background:#fafafa;"></div>
<div class="a" style="left:364px;top:0;width:2px;height:853px;background:#e8e8ec;"></div>
<div class="a" style="left:0;top:853px;width:1582px;height:2px;background:#e8e8ec;"></div>
</div>
<div class="a" style="left:502px;top:630px;width:334px;height:64px;background:#dbe5f6;border-radius:8px;"></div>
<div class="t" style="left:535.00px;top:644.50px;font-size:33.07px;color:#1f1f1f;letter-spacing:0.57px;">All Time</div>
<div class="t" style="left:535.00px;top:740.20px;font-size:33.07px;color:#1f1f1f;">Today</div>
<div class="t" style="left:535.00px;top:835.90px;font-size:33.07px;color:#1f1f1f;letter-spacing:0.05px;">Yesterday</div>
<div class="t" style="left:533.00px;top:931.60px;font-size:33.07px;color:#1f1f1f;letter-spacing:0.44px;">Last 7 days</div>
<div class="t" style="left:533.00px;top:1027.30px;font-size:33.07px;color:#1f1f1f;letter-spacing:0.43px;">Last 30 days</div>
<div class="t" style="left:535.00px;top:1123.00px;font-size:33.07px;color:#1f1f1f;letter-spacing:0.10px;">This week</div>
<div class="t" style="left:535.00px;top:1218.70px;font-size:33.07px;color:#1f1f1f;letter-spacing:0.67px;">This month</div>
<div class="t" style="left:535.00px;top:1314.40px;font-size:33.07px;color:#1f1f1f;letter-spacing:-0.03px;">This year</div>
<div class="a" style="left:872px;top:618px;width:556px;height:104px;background:#dbe5f6;border-radius:24px;"></div>
<div class="a" style="left:884px;top:630px;width:532px;height:80px;box-sizing:border-box;border:2px solid #0d1b52;border-radius:8px;background:#fafafa;"></div>
<div class="t" style="left:900.00px;top:652.20px;font-size:33.07px;color:#3d3a4a;letter-spacing:-0.11px;">2022-08-01</div>
<div class="t" style="left:1446.00px;top:652.20px;font-size:33.07px;color:#8a84a0;">to</div>
<div class="a" style="left:1504px;top:630px;width:532px;height:80px;box-sizing:border-box;border:2px solid #e3e3e3;border-radius:8px;background:#fafafa;"></div>
<div class="t" style="left:1519.80px;top:652.20px;font-size:33.07px;color:#3d3a4a;letter-spacing:0.13px;">2022-08-31</div>
<svg class="a" style="left:917px;top:770px" width="15" height="24" viewBox="0 0 15 24"><path d="M12 2 L3 12 L12 22" fill="none" stroke="#1f1f1f" stroke-width="4"/></svg>
<svg class="a" style="left:1396px;top:770px" width="15" height="24" viewBox="0 0 15 24"><path d="M3 2 L12 12 L3 22" fill="none" stroke="#1f1f1f" stroke-width="4"/></svg>
<div class="t" style="left:1092.00px;top:764.00px;font-size:33.07px;color:#1f1f1f;letter-spacing:0.44px;">July 2022</div>
<svg class="a" style="left:1509px;top:770px" width="15" height="24" viewBox="0 0 15 24"><path d="M12 2 L3 12 L12 22" fill="none" stroke="#1f1f1f" stroke-width="4"/></svg>
<svg class="a" style="left:1989px;top:770px" width="15" height="24" viewBox="0 0 15 24"><path d="M3 2 L12 12 L3 22" fill="none" stroke="#b9b4c4" stroke-width="4"/></svg>
<div class="t" style="left:1661.00px;top:764.00px;font-size:33.07px;color:#1f1f1f;letter-spacing:0.40px;">August 2022</div>
<div class="t" style="left:916.50px;top:866.75px;font-size:22.74px;color:#8a84a0;-webkit-text-stroke:0.41px #8a84a0;">S</div>
<div class="t" style="left:1508.50px;top:866.75px;font-size:22.74px;color:#8a84a0;-webkit-text-stroke:0.41px #8a84a0;">S</div>
<div class="t" style="left:994.50px;top:866.75px;font-size:22.74px;color:#8a84a0;-webkit-text-stroke:0.41px #8a84a0;">M</div>
<div class="t" style="left:1586.50px;top:866.75px;font-size:22.74px;color:#8a84a0;-webkit-text-stroke:0.41px #8a84a0;">M</div>
<div class="t" style="left:1077.00px;top:866.75px;font-size:22.74px;color:#8a84a0;-webkit-text-stroke:0.41px #8a84a0;">T</div>
<div class="t" style="left:1669.00px;top:866.75px;font-size:22.74px;color:#8a84a0;-webkit-text-stroke:0.41px #8a84a0;">T</div>
<div class="t" style="left:1153.50px;top:866.75px;font-size:22.74px;color:#8a84a0;-webkit-text-stroke:0.41px #8a84a0;">W</div>
<div class="t" style="left:1745.50px;top:866.75px;font-size:22.74px;color:#8a84a0;-webkit-text-stroke:0.41px #8a84a0;">W</div>
<div class="t" style="left:1237.00px;top:866.75px;font-size:22.74px;color:#8a84a0;-webkit-text-stroke:0.41px #8a84a0;">T</div>
<div class="t" style="left:1829.00px;top:866.75px;font-size:22.74px;color:#8a84a0;-webkit-text-stroke:0.41px #8a84a0;">T</div>
<div class="t" style="left:1316.50px;top:866.75px;font-size:22.74px;color:#8a84a0;-webkit-text-stroke:0.41px #8a84a0;">F</div>
<div class="t" style="left:1908.50px;top:866.75px;font-size:22.74px;color:#8a84a0;-webkit-text-stroke:0.41px #8a84a0;">F</div>
<div class="t" style="left:1396.50px;top:866.75px;font-size:22.74px;color:#8a84a0;-webkit-text-stroke:0.41px #8a84a0;">S</div>
<div class="t" style="left:1988.50px;top:866.75px;font-size:22.74px;color:#8a84a0;-webkit-text-stroke:0.41px #8a84a0;">S</div>
<div class="t" style="left:1315.50px;top:947.53px;font-size:28.90px;color:#1f1f1f;letter-spacing:0.30px;">1</div>
<div class="t" style="left:1396.00px;top:947.53px;font-size:28.90px;color:#1f1f1f;letter-spacing:0.30px;">2</div>
<div class="t" style="left:916.00px;top:1031.53px;font-size:28.90px;color:#1f1f1f;letter-spacing:0.30px;">3</div>
<div class="t" style="left:996.00px;top:1031.53px;font-size:28.90px;color:#1f1f1f;letter-spacing:0.30px;">4</div>
<div class="t" style="left:1075.50px;top:1031.53px;font-size:28.90px;color:#1f1f1f;letter-spacing:0.30px;">5</div>
<div class="t" style="left:1156.00px;top:1031.53px;font-size:28.90px;color:#1f1f1f;letter-spacing:0.30px;">6</div>
<div class="t" style="left:1236.00px;top:1031.53px;font-size:28.90px;color:#1f1f1f;letter-spacing:0.30px;">7</div>
<div class="t" style="left:1316.00px;top:1031.53px;font-size:28.90px;color:#1f1f1f;letter-spacing:0.30px;">8</div>
<div class="t" style="left:1396.00px;top:1031.53px;font-size:28.90px;color:#1f1f1f;letter-spacing:0.30px;">9</div>
<div class="t" style="left:906.85px;top:1115.53px;font-size:28.90px;color:#1f1f1f;letter-spacing:0.30px;">10</div>
<div class="t" style="left:988.35px;top:1115.53px;font-size:28.90px;color:#1f1f1f;letter-spacing:0.30px;">11</div>
<div class="t" style="left:1067.35px;top:1115.53px;font-size:28.90px;color:#1f1f1f;letter-spacing:0.30px;">12</div>
<div class="t" style="left:1147.35px;top:1115.53px;font-size:28.90px;color:#1f1f1f;letter-spacing:0.30px;">13</div>
<div class="t" style="left:1226.85px;top:1115.53px;font-size:28.90px;color:#1f1f1f;letter-spacing:0.30px;">14</div>
<div class="t" style="left:1306.85px;top:1115.53px;font-size:28.90px;color:#1f1f1f;letter-spacing:0.30px;">15</div>
<div class="t" style="left:1387.35px;top:1115.53px;font-size:28.90px;color:#1f1f1f;letter-spacing:0.30px;">16</div>
<div class="t" style="left:907.35px;top:1199.53px;font-size:28.90px;color:#1f1f1f;letter-spacing:0.30px;">17</div>
<div class="t" style="left:987.35px;top:1199.53px;font-size:28.90px;color:#1f1f1f;letter-spacing:0.30px;">18</div>
<div class="t" style="left:1067.35px;top:1199.53px;font-size:28.90px;color:#1f1f1f;letter-spacing:0.30px;">19</div>
<div class="t" style="left:1147.35px;top:1199.53px;font-size:28.90px;color:#1f1f1f;letter-spacing:0.30px;">20</div>
<div class="t" style="left:1227.85px;top:1199.53px;font-size:28.90px;color:#1f1f1f;letter-spacing:0.30px;">21</div>
<div class="t" style="left:1307.85px;top:1199.53px;font-size:28.90px;color:#1f1f1f;letter-spacing:0.30px;">22</div>
<div class="t" style="left:1387.85px;top:1199.53px;font-size:28.90px;color:#1f1f1f;letter-spacing:0.30px;">23</div>
<div class="t" style="left:907.35px;top:1283.53px;font-size:28.90px;color:#1f1f1f;letter-spacing:0.30px;">24</div>
<div class="t" style="left:987.35px;top:1283.53px;font-size:28.90px;color:#1f1f1f;letter-spacing:0.30px;">25</div>
<div class="t" style="left:1067.85px;top:1283.53px;font-size:28.90px;color:#1f1f1f;letter-spacing:0.30px;">26</div>
<div class="t" style="left:1147.85px;top:1283.53px;font-size:28.90px;color:#1f1f1f;letter-spacing:0.30px;">27</div>
<div class="t" style="left:1227.85px;top:1283.53px;font-size:28.90px;color:#1f1f1f;letter-spacing:0.30px;">28</div>
<div class="t" style="left:1307.85px;top:1283.53px;font-size:28.90px;color:#1f1f1f;letter-spacing:0.30px;">29</div>
<div class="t" style="left:1387.35px;top:1283.53px;font-size:28.90px;color:#1f1f1f;letter-spacing:0.30px;">30</div>
<div class="t" style="left:907.85px;top:1367.53px;font-size:28.90px;color:#1f1f1f;letter-spacing:0.30px;">31</div>
<div class="a" style="left:1556px;top:922px;width:480px;height:80px;background:#dbe5f6;border-radius:40px;"></div>
<div class="a" style="left:1476px;top:1006px;width:560px;height:80px;background:#dbe5f6;border-radius:40px;"></div>
<div class="a" style="left:1476px;top:1090px;width:560px;height:80px;background:#dbe5f6;border-radius:40px;"></div>
<div class="a" style="left:1476px;top:1174px;width:560px;height:80px;background:#dbe5f6;border-radius:40px;"></div>
<div class="a" style="left:1476px;top:1258px;width:320px;height:80px;background:#dbe5f6;border-radius:40px;"></div>
<div class="a" style="left:1564px;top:930px;width:64px;height:64px;background:#306bd5;border-radius:50%;"></div>
<div class="a" style="left:1724px;top:1266px;width:64px;height:64px;background:#306bd5;border-radius:50%;"></div>
<div class="t" style="left:1499.85px;top:947.53px;font-size:28.90px;color:#cfcbd6;letter-spacing:0.30px;">31</div>
<div class="t" style="left:1587.50px;top:947.53px;font-size:28.90px;color:#fff;letter-spacing:0.30px;font-weight:700;">1</div>
<div class="t" style="left:1668.00px;top:947.53px;font-size:28.90px;color:#1f1f1f;letter-spacing:0.30px;">2</div>
<div class="t" style="left:1748.00px;top:947.53px;font-size:28.90px;color:#1f1f1f;letter-spacing:0.30px;">3</div>
<div class="t" style="left:1828.00px;top:947.53px;font-size:28.90px;color:#1f1f1f;letter-spacing:0.30px;">4</div>
<div class="t" style="left:1907.50px;top:947.53px;font-size:28.90px;color:#1f1f1f;letter-spacing:0.30px;">5</div>
<div class="t" style="left:1988.00px;top:947.53px;font-size:28.90px;color:#1f1f1f;letter-spacing:0.30px;">6</div>
<div class="t" style="left:1508.00px;top:1031.53px;font-size:28.90px;color:#1f1f1f;letter-spacing:0.30px;">7</div>
<div class="t" style="left:1588.00px;top:1031.53px;font-size:28.90px;color:#1f1f1f;letter-spacing:0.30px;">8</div>
<div class="t" style="left:1668.00px;top:1031.53px;font-size:28.90px;color:#1f1f1f;letter-spacing:0.30px;">9</div>
<div class="t" style="left:1738.85px;top:1031.53px;font-size:28.90px;color:#1f1f1f;letter-spacing:0.30px;">10</div>
<div class="t" style="left:1820.35px;top:1031.53px;font-size:28.90px;color:#1f1f1f;letter-spacing:0.30px;">11</div>
<div class="t" style="left:1899.35px;top:1031.53px;font-size:28.90px;color:#1f1f1f;letter-spacing:0.30px;">12</div>
<div class="t" style="left:1979.35px;top:1031.53px;font-size:28.90px;color:#1f1f1f;letter-spacing:0.30px;">13</div>
<div class="t" style="left:1498.85px;top:1115.53px;font-size:28.90px;color:#1f1f1f;letter-spacing:0.30px;">14</div>
<div class="t" style="left:1578.85px;top:1115.53px;font-size:28.90px;color:#1f1f1f;letter-spacing:0.30px;">15</div>
<div class="t" style="left:1659.35px;top:1115.53px;font-size:28.90px;color:#1f1f1f;letter-spacing:0.30px;">16</div>
<div class="t" style="left:1739.35px;top:1115.53px;font-size:28.90px;color:#1f1f1f;letter-spacing:0.30px;">17</div>
<div class="t" style="left:1819.35px;top:1115.53px;font-size:28.90px;color:#1f1f1f;letter-spacing:0.30px;">18</div>
<div class="t" style="left:1899.35px;top:1115.53px;font-size:28.90px;color:#1f1f1f;letter-spacing:0.30px;">19</div>
<div class="t" style="left:1979.35px;top:1115.53px;font-size:28.90px;color:#1f1f1f;letter-spacing:0.30px;">20</div>
<div class="t" style="left:1499.85px;top:1199.53px;font-size:28.90px;color:#1f1f1f;letter-spacing:0.30px;">21</div>
<div class="t" style="left:1579.85px;top:1199.53px;font-size:28.90px;color:#1f1f1f;letter-spacing:0.30px;">22</div>
<div class="t" style="left:1659.85px;top:1199.53px;font-size:28.90px;color:#1f1f1f;letter-spacing:0.30px;">23</div>
<div class="t" style="left:1739.35px;top:1199.53px;font-size:28.90px;color:#1f1f1f;letter-spacing:0.30px;">24</div>
<div class="t" style="left:1819.35px;top:1199.53px;font-size:28.90px;color:#1f1f1f;letter-spacing:0.30px;">25</div>
<div class="t" style="left:1899.85px;top:1199.53px;font-size:28.90px;color:#1f1f1f;letter-spacing:0.30px;">26</div>
<div class="t" style="left:1979.85px;top:1199.53px;font-size:28.90px;color:#1f1f1f;letter-spacing:0.30px;">27</div>
<div class="t" style="left:1499.85px;top:1283.53px;font-size:28.90px;color:#1f1f1f;letter-spacing:0.30px;">28</div>
<div class="t" style="left:1579.85px;top:1283.53px;font-size:28.90px;color:#1f1f1f;letter-spacing:0.30px;">29</div>
<div class="t" style="left:1659.35px;top:1283.53px;font-size:28.90px;color:#1f1f1f;letter-spacing:0.30px;">30</div>
<div class="t" style="left:1739.85px;top:1283.53px;font-size:28.90px;color:#fff;letter-spacing:0.30px;font-weight:700;">31</div>
<div class="t" style="left:1827.50px;top:1283.53px;font-size:28.90px;color:#cfcbd6;letter-spacing:0.30px;">1</div>
<div class="t" style="left:1908.00px;top:1283.53px;font-size:28.90px;color:#cfcbd6;letter-spacing:0.30px;">2</div>
<div class="t" style="left:1988.00px;top:1283.53px;font-size:28.90px;color:#cfcbd6;letter-spacing:0.30px;">3</div>
<div class="a" style="left:1832px;top:1146px;width:8px;height:8px;background:#4a8af4;border-radius:50%;"></div>
<div class="t" style="left:518.00px;top:1508.00px;font-size:33.07px;color:#3d3a4a;letter-spacing:-2.70px;-webkit-text-stroke:0.60px #3d3a4a;">31</div>
<div class="t" style="left:563.70px;top:1508.00px;font-size:33.07px;color:#8a84a0;letter-spacing:-0.14px;-webkit-text-stroke:0.60px #8a84a0;">days selected</div>
<div class="a" style="left:1104px;top:1504px;width:80px;height:44px;box-sizing:border-box;border:2px solid #dedde3;border-radius:22px;background:#f4f3f6;"></div>
<div class="a" style="left:1112px;top:1512px;width:28px;height:28px;background:#8a8299;border-radius:50%;"></div>
<div class="t" style="left:1199.00px;top:1509.00px;font-size:33.07px;color:#1f1f1f;letter-spacing:0.18px;-webkit-text-stroke:0.60px #1f1f1f;">Include time</div>
<div class="t" style="left:1443.50px;top:1509.00px;font-size:33.07px;color:#c2272d;letter-spacing:-0.88px;-webkit-text-stroke:0.60px #c2272d;">Reset</div>
<div class="a" style="left:1592px;top:1486px;width:164px;height:80px;box-sizing:border-box;border:2px solid #dcdcdc;border-radius:8px;background:#fff;"></div>
<div class="t" style="left:1623.80px;top:1509.00px;font-size:33.07px;color:#1f1f1f;letter-spacing:-0.46px;-webkit-text-stroke:0.60px #1f1f1f;">Cancel</div>
<div class="a" style="left:1788px;top:1486px;width:248px;height:80px;background:#306bd5;border-radius:8px;"></div>
<div class="t" style="left:1821.80px;top:1509.00px;font-size:33.07px;color:#fff;letter-spacing:-0.84px;-webkit-text-stroke:0.60px #fff;">Apply Range</div>
</body></html>
